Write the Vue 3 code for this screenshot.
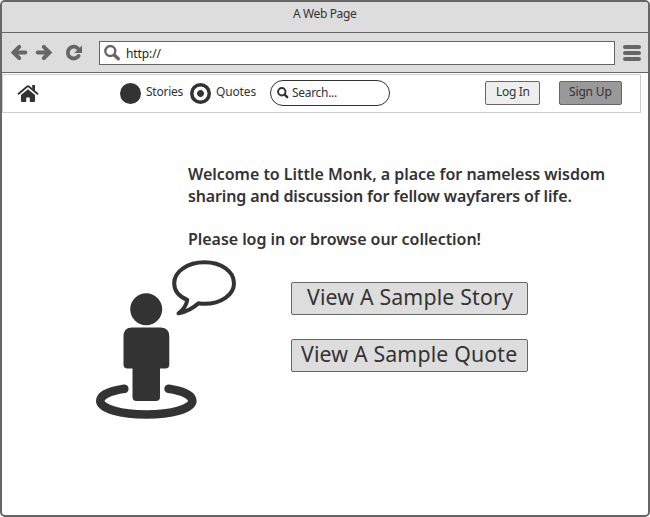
<script setup>
const samples = ['Story', 'Quote']
</script>

<template>
  <div class="window">
    <header class="titlebar"><span class="t-title">A Web Page</span></header>

    <div class="toolbar">
      <svg class="nav-icons" width="86" height="38" viewBox="2 33 86 38" fill="none" stroke="#666">
        <path d="M25.300 52.500H13.500M19.200 46.900l-5.700 5.600 5.700 5.600" stroke-width="4" stroke-linecap="round" />
        <path d="M37.700 52.500H49.500M43.800 46.900l5.700 5.600-5.700 5.600" stroke-width="4" stroke-linecap="round" />
        <path d="M77.800 48.300A5.900 5.900 0 1 0 78.600 55.900" stroke-width="3.800" stroke-linecap="round" />
        <path d="M82 45.500v7.500h-7.800z" fill="#666" stroke="none" />
      </svg>
      <div class="address">
        <svg width="18" height="18" viewBox="0 0 18 18" fill="none" stroke="#666">
          <circle cx="6.300" cy="6.100" r="5" stroke-width="2.400" />
          <path d="M10.500 10.200l3.800 3.600" stroke-width="3.400" stroke-linecap="round" />
        </svg>
        <span class="t-url">http://</span>
      </div>
      <div class="menu"><i></i><i></i><i></i></div>
    </div>

    <nav class="nav">
      <svg class="home" width="22" height="18" viewBox="0 0 22 18" fill="#333">
        <path d="M11 5.200L4 11V17.200Q4 18 4.800 18H9.200V13.400H12.800V18H17.200Q18 18 18 17.200V11Z" />
        <path d="M1 10.200L10.200 2.500Q11 1.900 11.800 2.500L21 10.200" fill="none" stroke="#333" stroke-width="1.800" />
        <path d="M15.200 1H18V7L15.200 4.700Z" />
      </svg>
      <span class="radio"></span>
      <span class="label t-stories">Stories</span>
      <span class="radio ring"></span>
      <span class="label t-quotes">Quotes</span>
      <div class="search">
        <svg width="12" height="12" viewBox="0 0 12 12" fill="none" stroke="#333">
          <circle cx="4.800" cy="4.800" r="3.700" stroke-width="2" />
          <path d="M7.700 7.700l2.500 2.500" stroke-width="2.400" stroke-linecap="round" />
        </svg>
        <span class="t-search">Search...</span>
      </div>
      <button class="btn login"><span class="t-login">Log In</span></button>
      <button class="btn signup"><span class="t-signup">Sign Up</span></button>
    </nav>

    <main class="content">
      <svg class="figure" width="142" height="162" viewBox="95 259 142 162" fill="#333">
        <circle cx="146.200" cy="309.300" r="16" />
        <path d="M132 327.500H161Q169.300 328 169.300 336.500V364.500Q169.300 368.500 165.300 368.500H160V397Q160 401 156 401H136.500Q132.500 401 132.500 397V368.500H127.500Q123.500 368.500 123.500 364.500V336.500Q123.500 327.500 132 327.500Z" />
        <path d="M124.300 388.800C109 391 100.300 395.500 100.300 401C100.300 408.500 121 414.500 146.300 414.500S192.300 408.500 192.300 401C192.300 395.500 183.500 391 168.600 388.800" fill="none" stroke="#333" stroke-width="8.600" stroke-linecap="round" />
        <path d="M187.300 299.800C179 296.500 174.200 290.300 174.200 283.200C174.200 271.500 187.500 262.300 204.500 262.300S234 271.500 234 283.200S221 303.800 204.500 303.800Q201.500 303.800 198.500 303.200Q190 311 178.500 313.300Q186 308 187.300 299.800Z" fill="none" stroke="#333" stroke-width="4" stroke-linejoin="round" />
      </svg>
      <section class="copy">
        <p class="t-l1">Welcome to Little Monk, a place for nameless wisdom</p>
        <p class="t-l2">sharing and discussion for fellow wayfarers of life.</p>
        <p class="t-l3">Please log in or browse our collection!</p>
        <button v-for="s in samples" :key="s" class="btn sample"><span>View A Sample {{ s }}</span></button>
      </section>
    </main>
  </div>
</template>

<style>
body { background: #fff; }
</style>

<style scoped>
* { box-sizing: border-box; }
.window { width: 650px; height: 517px; border: 2px solid #666; border-radius: 5px; background: #fff; overflow: hidden; font: 12px/16px "Noto Sans", "Open Sans", sans-serif; color: #333; white-space: nowrap; }
.titlebar { height: 31px; background: #ddd; border-bottom: 1px solid #666; padding: 4px 0 0 291px; letter-spacing: -0.380px; }
.toolbar { height: 40px; background: #ddd; border-bottom: 1px solid #666; display: flex; align-items: flex-start; }
.nav-icons { margin-right: 11px; }
.address { margin-top: 8px; width: 516px; height: 24px; border: 1px solid #666; background: #fff; display: flex; padding: 3px 0 0 4px; }
.address span { margin: 1px 0 0 4px; color: #222; letter-spacing: -0.100px; }
.menu { margin: 12px 0 0 8px; display: flex; flex-direction: column; gap: 2px; }
.menu i { width: 18px; height: 4px; border-radius: 2px; background: #666; }
.nav { width: 639px; height: 39px; margin-top: 1px; border: 1px solid #ccc; display: flex; align-items: flex-start; }
.home { margin: 9px 0 0 14px; }
.radio { width: 21px; height: 21px; border-radius: 50%; background: #333; margin: 8px 0 0 81px; flex: none; }
.ring { margin-left: 5px; background: radial-gradient(circle, #333 3px, #fff 3.800px, #fff 6.600px, #333 7.300px); }
.label { margin: 9px 0 0 5px; width: 39px; letter-spacing: -0.250px; }
.t-quotes { width: 40px; letter-spacing: -0.150px; }
.search { margin: 5px 0 0 14px; width: 120px; height: 26px; border: 1px solid #333; border-radius: 13px; display: flex; padding: 6px 0 0 6px; }
.search span { margin: -2px 0 0 3px; letter-spacing: -0.300px; }
.btn { appearance: none; font: inherit; color: #333; border: 1px solid #666; border-radius: 2px; padding: 0; display: flex; }
.login { margin: 6px 0 0 95px; width: 55px; height: 24px; background: #eee; padding: 2px 0 0 10px; letter-spacing: -0.300px; }
.signup { margin: 6px 0 0 19px; width: 63px; height: 24px; background: #999; padding: 2px 0 0 9px; letter-spacing: -0.150px; }
.content { display: flex; align-items: flex-start; padding: 50px 0 0 93px; }
.figure { margin-top: 96px; flex: none; }
.copy { margin-left: -49px; font-size: 16px; font-weight: 600; line-height: 22px; }
.copy p { margin: 0; letter-spacing: -0.025px; }
.copy .t-l2 { letter-spacing: -0.140px; }
.copy .t-l3 { margin-top: 21px; letter-spacing: -0.050px; }
.sample { width: 237px; height: 33px; margin: 32px 0 0 103px; background: #ddd; font-size: 21.300px; font-weight: 400; line-height: 27px; padding-left: 15px; letter-spacing: 0.160px; }
.sample + .sample { margin-top: 24px; padding-left: 9px; }
</style>
